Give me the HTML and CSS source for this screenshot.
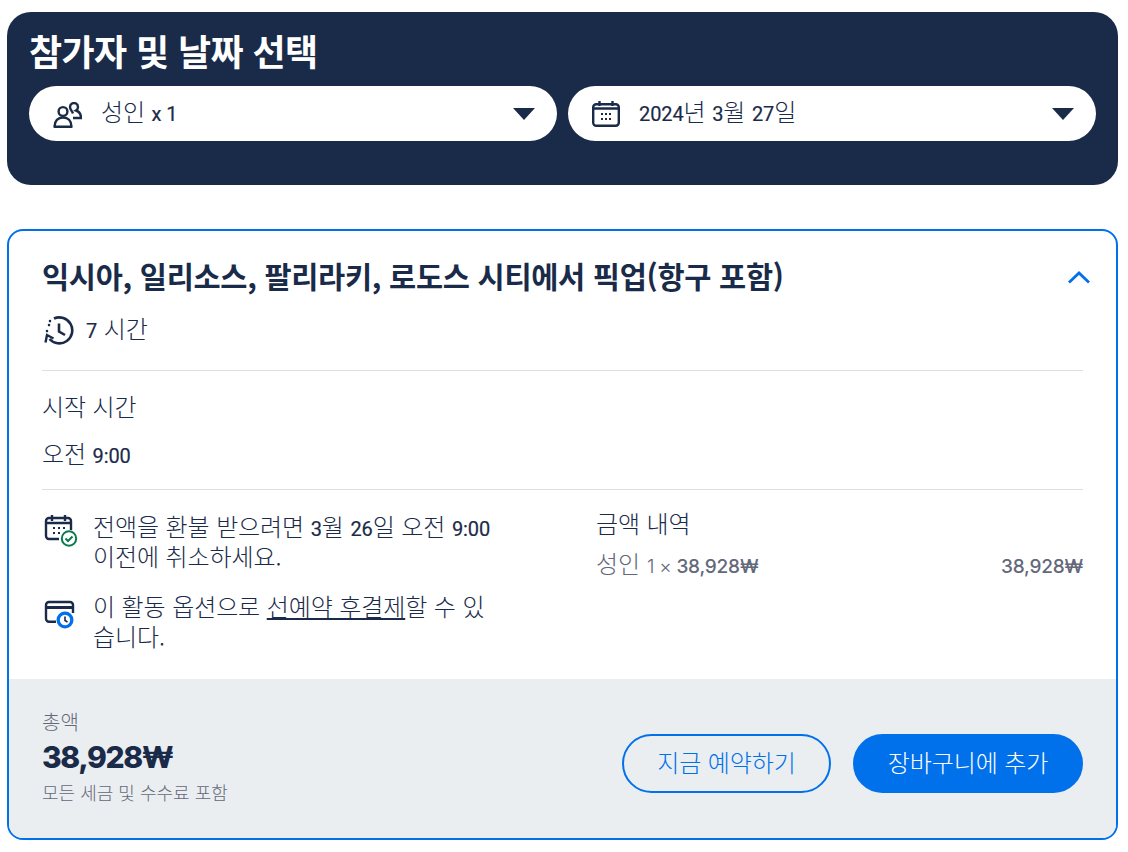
FILE: index.html
```html
<!DOCTYPE html>
<html lang="ko">
<head>
<meta charset="utf-8">
<title>참가자 및 날짜 선택</title>
<link rel="stylesheet" href="styles.css">
</head>
<body>
<section class="picker">
  <h2 class="picker-title">참가자 및 날짜 선택</h2>
  <div class="picker-row">
    <div class="select">
      <svg class="select-icon" width="29" height="26" viewBox="0 0 29 26" fill="none" stroke="#1a2b49" stroke-width="2.4"><path d="M20 11.500c-1-2.500-3-4-3-6.500a4 4 0 1 1 6 3.500c3 1 5 3.500 5 7.500h-8"/><circle cx="10" cy="9.500" r="4.400" fill="#fff"/><path d="M1.500 24.800c0-6 3.500-9.300 8.500-9.300s8.500 3.300 8.500 9.300z" stroke-linejoin="round" fill="#fff"/></svg>
      <span class="select-text ko">성인 <span class="num">x 1</span></span>
      <span class="caret"></span>
    </div>
    <div class="select">
      <svg class="select-icon cal" width="28" height="26" viewBox="0 0 28 26" fill="none" stroke="#1a2b49" stroke-width="2.4"><rect x="1.2" y="3.2" width="25.6" height="21.6" rx="3"/><path d="M1.2 7.500h25.600M7.500 0v5M20.500 0v5"/><path d="M9 13h2M13 13h2M17 13h2M9 18h2M13 18h2M17 18h2" stroke-width="2.2"/></svg>
      <span class="select-text ko"><span class="num">2024</span>년 <span class="num">3</span>월 <span class="num">27</span>일</span>
      <span class="caret"></span>
    </div>
  </div>
</section>
<section class="card">
  <div class="card-body">
    <div class="card-head">
      <h3 class="card-title">익시아, 일리소스, 팔리라키, 로도스 시티에서 픽업(항구 포함)</h3>
      <svg class="chevron" width="24" height="14" viewBox="0 0 24 14" fill="none" stroke="#0071eb" stroke-width="2.8"><path d="M2 12.500L12 3l10 9.500"/></svg>
    </div>
    <div class="duration">
      <svg width="30" height="30" viewBox="0 0 30 30" fill="none" stroke="#1a2b49" stroke-width="2.6"><path d="M10 3.500A13 13 0 1 1 5.500 24"/><path d="M1.500 27.500l1.500-7.500 6.500 3.500" stroke-width="2.400"/><path d="M15 8.500v8l6 3.500"/><path d="M5 10v.1M3 16v.1M6 6v.1" stroke-linecap="round"/></svg>
      <span class="ko"><span class="num">7</span> 시간</span>
    </div>
    <div class="section">
      <p class="line ko">시작 시간</p>
      <p class="line ko">오전 <span class="num">9:00</span></p>
    </div>
    <div class="details">
      <div class="policies">
        <div class="policy ko">
          <svg class="policy-icon" width="36" height="34" viewBox="0 0 36 34" fill="none" stroke="#1a2b49" stroke-width="2.400"><path d="M17 26H7a3 3 0 0 1-3-3V8a3 3 0 0 1 3-3h19a3 3 0 0 1 3 3v9"/><path d="M4 10h25M10 2v6M23 2v6"/><path d="M11 15h2M16 15h2M21 15h2M11 20h2M16 20h2" stroke-width="2"/><circle cx="27" cy="25.500" r="7.200" fill="#fff" stroke="#0a7a4c" stroke-width="2"/><path d="M23.500 25.500l2.500 2.500 4.500-4.500" stroke="#0a7a4c" stroke-width="2"/></svg>
          <span>전액을 환불 받으려면 <span class="num">3</span>월 <span class="num">26</span>일 오전 <span class="num">9:00</span><br>이전에 취소하세요.</span>
        </div>
        <div class="policy ko">
          <svg class="policy-icon alt" width="36" height="34" viewBox="0 0 36 34" fill="none" stroke="#1a2b49" stroke-width="2.400"><path d="M14 22.800H7a3 3 0 0 1-3-3V6a3 3 0 0 1 3-3h21a3 3 0 0 1 3 3v8"/><path d="M4 8.500h27" stroke-width="3"/><circle cx="23" cy="21" r="8.500" fill="#0071eb" stroke="none"/><circle cx="23" cy="21" r="5.200" fill="#fff" stroke="none"/><path d="M23 17.500v4l2.500 1.500" stroke="#1a2b49" stroke-width="1.600"/></svg>
          <span>이 활동 옵션으로 <u>선예약 후결제</u>할 수 있<br>습니다.</span>
        </div>
      </div>
      <div class="price">
        <p class="price-title ko">금액 내역</p>
        <div class="price-row"><span class="ko-sm">성인 <span class="amt"><span class="thin">1 ×</span> 38,928₩</span></span><span class="amt">38,928₩</span></div>
      </div>
    </div>
  </div>
  <div class="footer">
    <div class="total">
      <div class="total-label">총액</div>
      <div class="total-value">38,928₩</div>
      <div class="total-note">모든 세금 및 수수료 포함</div>
    </div>
    <div class="actions">
      <button class="btn btn-outline">지금 예약하기</button>
      <button class="btn btn-fill">장바구니에 추가</button>
    </div>
  </div>
</section>
</body>
</html>
```
FILE: styles.css
```css
* { box-sizing: border-box; }
html, body { margin: 0; padding: 0; background: #fff; }
body {
  padding: 12px 10px 0 7px;
  font-family: "Noto Sans CJK KR", sans-serif;
  color: #1a2b49;
  font-size: 24px;
  font-weight: 300;
}
.ko { font-size: 24px; font-weight: 300; letter-spacing: -0.1px; }
.num { font-family: "Roboto", sans-serif; font-size: 20px; font-weight: 400; letter-spacing: -0.1px; line-height: 1; -webkit-text-stroke: 0.2px #1a2b49; }
.picker {
  background: #1a2b49;
  border-radius: 24px;
  height: 173px;
  padding: 15px 22px;
}
.picker-title { margin: 0 0 13px; color: #fff; font-size: 36px; line-height: 46px; font-weight: 700; letter-spacing: -0.6px; }
.picker-row { display: flex; gap: 11px; }
.select {
  flex: 1;
  height: 55px;
  background: #fff;
  border-radius: 28px;
  display: flex;
  align-items: center;
  padding: 0 22px 0 24px;
}
.select-icon { margin-right: 19px; flex: none; margin-top: 2px; }
.select-icon.cal { margin-right: 19px; margin-top: 0; }
.select-text { flex: 1; line-height: 30px; margin-top: -5px; }
.caret { width: 0; height: 0; border-left: 11px solid transparent; border-right: 11px solid transparent; border-top: 12px solid #1a2b49; }
.card {
  margin-top: 44px;
  border: 2px solid #0071eb;
  border-radius: 16px;
  overflow: hidden;
  height: 611px;
  display: flex;
  flex-direction: column;
}
.card-body { flex: 1; padding: 0 33px; }
.card-head { display: flex; justify-content: space-between; align-items: center; height: 91px; padding-bottom: 3px; }
.card-title { margin: 0; font-size: 29.5px; font-weight: 700; letter-spacing: -0.3px; line-height: 40px; }
.chevron { margin-right: -8px; margin-top: 3px; }
.duration { display: flex; align-items: center; gap: 12px; height: 30px; margin-top: -7px; padding-left: 2px; line-height: 30px; }
.duration .ko { margin-top: -4px; }
.section { margin-top: 25px; border-top: 1px solid #dcdfe4; border-bottom: 1px solid #dcdfe4; height: 120px; padding-top: 20px; }
.line { margin: 0 0 18px; line-height: 29px; }
.details { display: flex; padding-top: 21px; }
.policies { width: 554px; }
.policy { display: flex; gap: 15px; line-height: 30px; margin-bottom: 20px; width: 470px; }
.policy-icon { flex: none; margin-top: 2px; }
.policy-icon.alt { margin-top: 8px; }
.price { flex: 1; }
.price-title { margin: 0 0 10px; line-height: 30px; margin-top: -3px; }
.price-row { display: flex; justify-content: space-between; align-items: baseline; color: #63687a; line-height: 30px; }
.ko-sm { font-size: 24px; }
.amt { font-family: "Inter", sans-serif; font-size: 19px; font-weight: 500; letter-spacing: -0.2px; line-height: 1; }
.thin { font-weight: 300; }
.footer {
  height: 159px;
  background: #ebeef1;
  padding: 0 33px;
  display: flex;
  align-items: center;
  justify-content: space-between;
  flex: none;
}
.total { margin-top: -4px; }
.total-label { color: #63687a; font-size: 20px; line-height: 28px; }
.total-value { font-family: "Inter", sans-serif; font-size: 30px; font-weight: 800; line-height: 42px; letter-spacing: -1.4px; }
.total-note { color: #63687a; font-size: 18px; line-height: 28px; }
.actions { display: flex; gap: 22px; margin-top: 9px; }
.btn { height: 59px; border-radius: 30px; font: inherit; font-size: 24px; border: 2px solid #0071eb; padding: 0 0 4px; letter-spacing: -0.1px; }
.btn-outline { width: 209px; background: transparent; color: #0071eb; }
.btn-fill { width: 230px; background: #0071eb; color: #fff; }
```
